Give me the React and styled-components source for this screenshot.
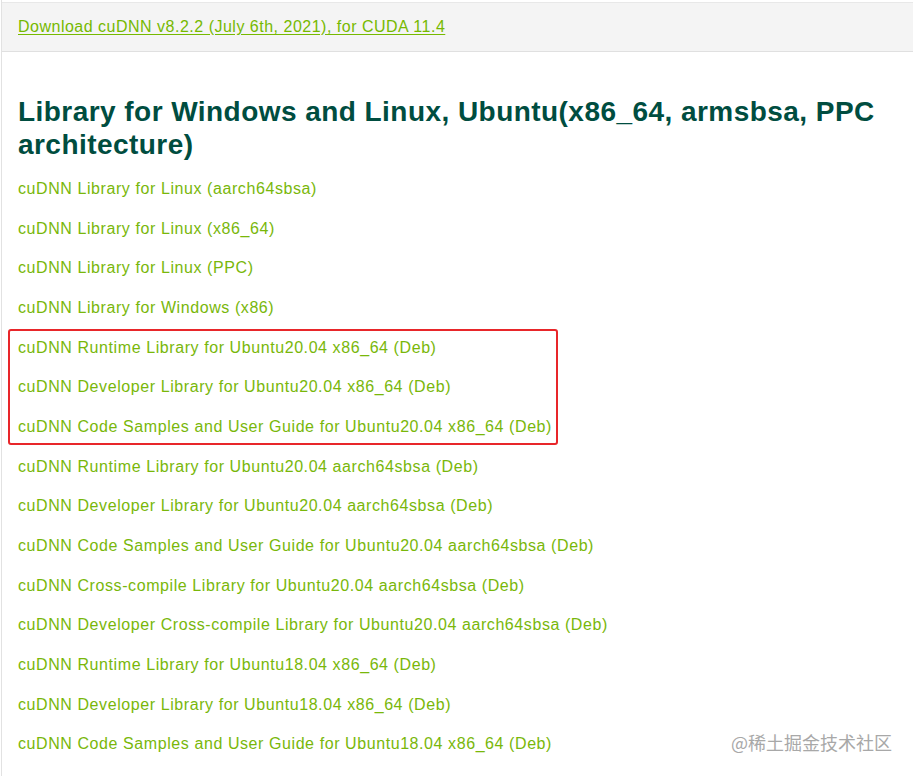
import React from "react";
import styled, { createGlobalStyle } from "styled-components";

const Global = createGlobalStyle`
  html, body { margin: 0; padding: 0; background: #fff; }
  body { font-family: "Liberation Sans", Arial, sans-serif; }
`;

const Page = styled.div`
  position: relative;
  width: 913px;
  height: 776px;
  overflow: hidden;
  box-sizing: border-box;
  border-left: 1px solid #e2e2e2;
  margin-left: 1px;
`;

const TopBar = styled.div`
  margin-top: 2px;
  height: 50px;
  box-sizing: border-box;
  background: #f4f4f4;
  border-top: 1px solid #e8e8e8;
  border-bottom: 1px solid #e0e0e0;
  display: flex;
  align-items: center;
  padding-left: 16px;
`;

const TopLink = styled.a`
  color: #76b900;
  font-size: 16px;
  letter-spacing: 0.5px;
  text-decoration: underline;
  text-underline-offset: 2px;
  cursor: pointer;
`;

const Content = styled.div`
  padding: 0 16px;
`;

const Heading = styled.h2`
  margin: 43px 0 8px;
  font-size: 28px;
  line-height: 33px;
  font-weight: 700;
  color: #004d40;
  letter-spacing: 0.45px;
`;

const List = styled.div`
  display: flex;
  flex-direction: column;
`;

const Item = styled.a`
  display: flex;
  align-items: center;
  height: 39.7px;
  color: #79b70a;
  font-size: 16px;
  letter-spacing: 0.58px;
  text-decoration: none;
  cursor: pointer;
`;

const Highlight = styled.div`
  position: relative;
  display: flex;
  flex-direction: column;
  &::after {
    content: "";
    position: absolute;
    top: 1px;
    bottom: 2px;
    left: -10px;
    width: 550px;
    border: 2px solid #e8262a;
    border-radius: 3px;
    box-sizing: border-box;
    pointer-events: none;
  }
`;

const Watermark = styled.div`
  position: absolute;
  right: 22px;
  bottom: 21px;
  font-family: "Noto Sans CJK SC", sans-serif;
  font-size: 18px;
  color: #a8a8a8;
`;

const before = [
  "cuDNN Library for Linux (aarch64sbsa)",
  "cuDNN Library for Linux (x86_64)",
  "cuDNN Library for Linux (PPC)",
  "cuDNN Library for Windows (x86)",
];
const highlighted = [
  "cuDNN Runtime Library for Ubuntu20.04 x86_64 (Deb)",
  "cuDNN Developer Library for Ubuntu20.04 x86_64 (Deb)",
  "cuDNN Code Samples and User Guide for Ubuntu20.04 x86_64 (Deb)",
];
const after = [
  "cuDNN Runtime Library for Ubuntu20.04 aarch64sbsa (Deb)",
  "cuDNN Developer Library for Ubuntu20.04 aarch64sbsa (Deb)",
  "cuDNN Code Samples and User Guide for Ubuntu20.04 aarch64sbsa (Deb)",
  "cuDNN Cross-compile Library for Ubuntu20.04 aarch64sbsa (Deb)",
  "cuDNN Developer Cross-compile Library for Ubuntu20.04 aarch64sbsa (Deb)",
  "cuDNN Runtime Library for Ubuntu18.04 x86_64 (Deb)",
  "cuDNN Developer Library for Ubuntu18.04 x86_64 (Deb)",
  "cuDNN Code Samples and User Guide for Ubuntu18.04 x86_64 (Deb)",
];

export default function App() {
  return (
    <>
      <Global />
      <Page>
        <TopBar>
          <TopLink>Download cuDNN v8.2.2 (July 6th, 2021), for CUDA 11.4</TopLink>
        </TopBar>
        <Content>
          <Heading>
            Library for Windows and Linux, Ubuntu(x86_64, armsbsa, PPC architecture)
          </Heading>
          <List>
            {before.map((t) => (
              <Item key={t}>{t}</Item>
            ))}
            <Highlight>
              {highlighted.map((t) => (
                <Item key={t}>{t}</Item>
              ))}
            </Highlight>
            {after.map((t) => (
              <Item key={t}>{t}</Item>
            ))}
          </List>
        </Content>
        <Watermark>@稀土掘金技术社区</Watermark>
      </Page>
    </>
  );
}
